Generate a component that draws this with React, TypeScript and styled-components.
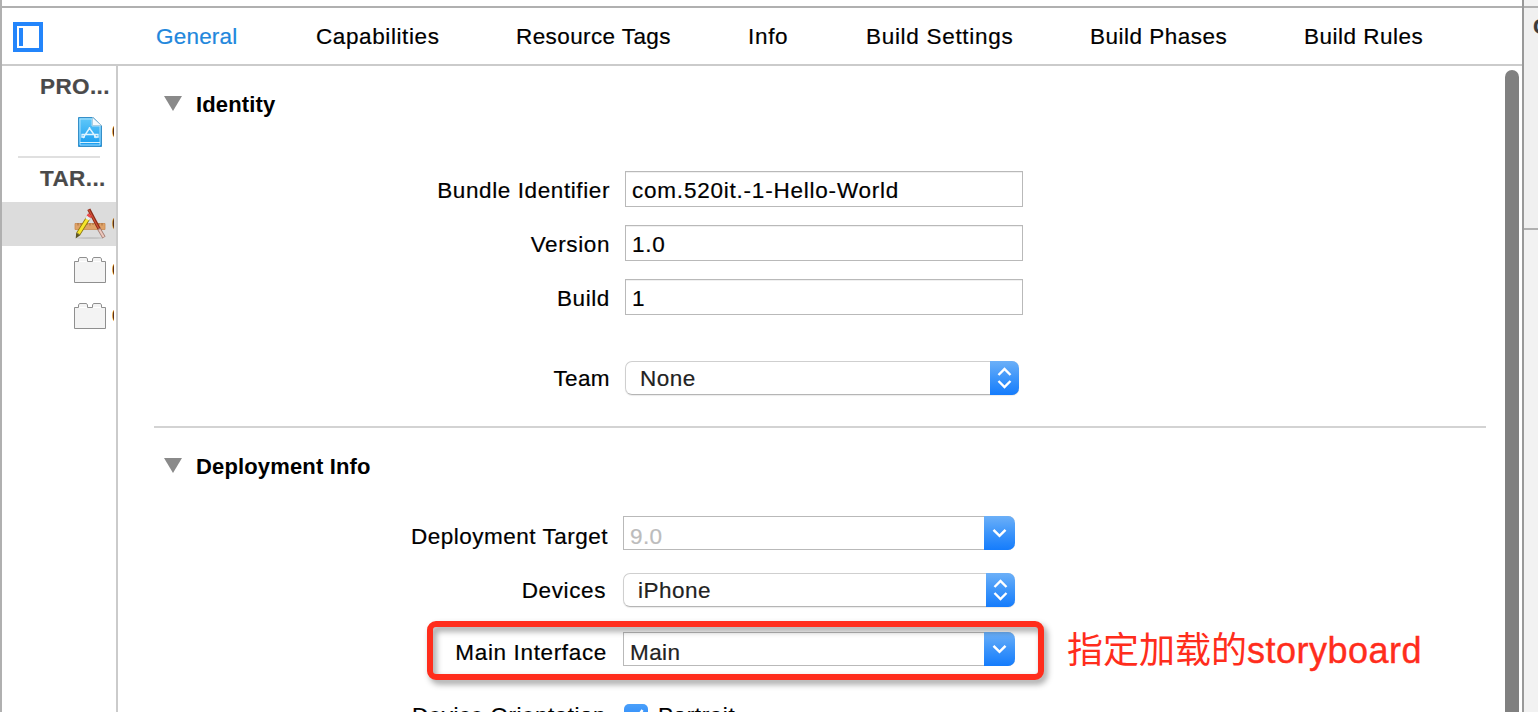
import React from "react";
import styled, { createGlobalStyle } from "styled-components";

const GlobalStyle = createGlobalStyle`
  * { box-sizing: border-box; }
  html, body { margin: 0; padding: 0; background: #fff; overflow: hidden; }
  body {
    font-family: "Liberation Sans", Arial, "Noto Sans CJK SC", sans-serif;
    font-size: 22.5px;
    line-height: 26px;
    color: #000;
    -webkit-text-stroke: 0.2px currentColor;
  }
`;

const Window = styled.div`
  display: flex;
  width: 1538px;
  height: 712px;
  overflow: hidden;
`;

const Editor = styled.div`
  display: flex;
  flex-direction: column;
  width: 1524px;
  border-left: 2px solid #b0b0b0;
  border-right: 2px solid #999;
`;

const Strip = styled.div`
  flex: none;
  height: 8px;
  border-bottom: 2px solid #b0b0b0;
`;

const Header = styled.header`
  flex: none;
  display: flex;
  align-items: center;
  height: 58px;
  padding-left: 11px;
  border-bottom: 2px solid #cbcbcb;
`;

const PanelToggle = styled.div`
  flex: none;
  width: 30px;
  height: 30px;
  margin-top: 2px;
  padding: 2px;
  border: 4px solid #2385fb;
`;

const PanelBar = styled.div`
  width: 4px;
  height: 18px;
  background: #2385fb;
`;

const Tabs = styled.nav`
  display: grid;
  grid-template-columns: 160px 200px 232px 118px 224px 214px 140px;
  margin: 2px 0 0 113px;
`;

const Tab = styled.span<{ $active?: boolean; $track: number }>`
  color: ${(p) => (p.$active ? "#2287dc" : "#000")};
  letter-spacing: ${(p) => p.$track}px;
  white-space: nowrap;
`;

const Body = styled.div`
  flex: 1;
  min-height: 0;
  display: flex;
`;

const Sidebar = styled.aside`
  flex: none;
  width: 116px;
  border-right: 2px solid #cbcbcb;
  overflow: hidden;
`;

const SideHeading = styled.div`
  height: 44px;
  padding: 8px 0 0 38px;
  font-weight: bold;
  letter-spacing: 0.4px;
  color: #4a4a4a;
  white-space: nowrap;
`;

const SideItem = styled.div<{ $selected?: boolean; $height: number }>`
  display: flex;
  align-items: center;
  height: ${(p) => p.$height}px;
  padding-left: 70px;
  background: ${(p) => (p.$selected ? "#dcdcdc" : "transparent")};

  svg { flex: none; display: block; }
`;

const ItemName = styled.span`
  width: 2px;
  margin-left: 2px;
  overflow: hidden;
  white-space: nowrap;
  font-size: 18px;
  color: #4a3010;
`;

const SideRule = styled.div`
  width: 82px;
  height: 2px;
  margin: 2px 0 0 16px;
  background: #e0e0e0;
`;

const Content = styled.main`
  position: relative;
  flex: 1;
  min-width: 0;
  overflow: hidden;
  padding-left: 36px;
`;

const SectionTitle = styled.h2`
  display: flex;
  align-items: center;
  gap: 14px;
  height: 26px;
  margin: 26px 0 0;
  padding-left: 10px;
  font-size: 22px;
  font-weight: bold;
  letter-spacing: 0.15px;
  -webkit-text-stroke: 0;

  svg { margin-top: -3px; }
`;

const Row = styled.div<{ $top: number; $height: number }>`
  display: flex;
  height: ${(p) => p.$height}px;
  margin-top: ${(p) => p.$top}px;
`;

const Label = styled.label<{ $width: number; $gap: number; $drop?: number; $track?: number }>`
  flex: none;
  width: ${(p) => p.$width}px;
  margin-right: ${(p) => p.$gap}px;
  margin-top: ${(p) => 5 + (p.$drop ?? 2)}px;
  text-align: right;
  letter-spacing: ${(p) => p.$track ?? 0.6}px;
  white-space: nowrap;
`;

const Field = styled.div`
  width: 398px;
  height: 36px;
  padding: 6px 6px 0;
  border: 1px solid #b9b9b9;
  box-shadow: inset 0 1px 0 #f0f0f0;
  letter-spacing: 0.78px;
`;

const Popup = styled.div<{ $width: number }>`
  display: flex;
  justify-content: space-between;
  width: ${(p) => p.$width}px;
  height: 34px;
  border: 1px solid #cfcfcf;
  border-bottom-color: #b5b5b5;
  border-right: 0;
  border-radius: 7px;
  padding: 4px 0 0 14px;
  color: #222;
  letter-spacing: 0.5px;
  box-shadow: 0 1px 1px rgba(0, 0, 0, 0.08);
`;

const Combo = styled.div<{ $placeholder?: boolean }>`
  display: flex;
  justify-content: space-between;
  width: 392px;
  height: 34px;
  border: 1px solid #b9b9b9;
  border-right: 0;
  border-radius: 0 7px 7px 0;
  padding: 7px 0 0 6px;
  color: ${(p) => (p.$placeholder ? "#bcbcbc" : "#222")};
  letter-spacing: 0.4px;
`;

const Cap = styled.span<{ $width: number; $lift: number }>`
  display: flex;
  align-items: center;
  justify-content: center;
  width: ${(p) => p.$width}px;
  height: 34px;
  margin-top: -${(p) => p.$lift}px;
  border-radius: 0 7px 7px 0;
  background: linear-gradient(#6cb0f8, #3d95fa 50%, #157cfc);
`;

const Divider = styled.div`
  width: 1332px;
  height: 2px;
  margin-top: 31px;
  background: #d3d3d3;
`;

const Checkbox = styled.span`
  flex: none;
  width: 24px;
  height: 24px;
  margin-right: 10px;
  border-radius: 5px;
  background: linear-gradient(#4ba0fa, #1a7ffc);

  svg { display: block; }
`;

const CheckLabel = styled.span`
  letter-spacing: 0.6px;
  margin-top: -1px;
`;

const Highlight = styled.div`
  position: absolute;
  left: 309px;
  top: 555px;
  width: 617px;
  height: 59px;
  border: 6px solid #ff2d1c;
  border-radius: 9px;
  filter: drop-shadow(3px 4px 3px rgba(0, 0, 0, 0.4));
`;

const Annotation = styled.div`
  position: absolute;
  left: 949px;
  top: 560px;
  font-size: 36px;
  line-height: 50px;
  color: #ff2d1c;
  white-space: nowrap;
  -webkit-text-stroke: 0;
`;

const Latin = styled.span`
  letter-spacing: 0.5px;
  -webkit-text-stroke: 0.4px currentColor;
`;

const Scrollbar = styled.div`
  position: absolute;
  right: 3px;
  top: 4px;
  bottom: -10px;
  width: 14px;
  border-radius: 7px;
  background: #808080;
`;

const Inspector = styled.aside`
  width: 14px;
  overflow: hidden;
  background: #f2f2f2;
`;

const InspectorTitle = styled.div`
  height: 222px;
  padding: 6px 0 0 9px;
  border-bottom: 2px solid #b0b0b0;
  font-weight: bold;
  color: #3b3b3b;
  background: #f0f0f0;
`;

const Triangle = () => (
  <svg width="18" height="15" viewBox="0 0 18 15">
    <path d="M0 0H18L9 15Z" fill="#8a8a8a" />
  </svg>
);

const UpDown = () => (
  <svg width="16" height="22" viewBox="0 0 16 22" fill="none" stroke="#fff" strokeWidth="2.4">
    <path d="M1.5 8L7.5 2L13.5 8M1.5 14L7.5 20L13.5 14" />
  </svg>
);

const Down = () => (
  <svg width="16" height="10" viewBox="0 0 16 10" fill="none" stroke="#fff" strokeWidth="2.5">
    <path d="M1.5 1.8L7.5 7.8L13.5 1.8" />
  </svg>
);

const ProjectIcon = () => (
  <svg width="38" height="32" viewBox="0 0 38 32">
    <defs>
      <linearGradient id="doc" x1="0" y1="0" x2="0" y2="1">
        <stop offset="0" stopColor="#62c9f9" />
        <stop offset="1" stopColor="#159bf0" />
      </linearGradient>
    </defs>
    <path d="M6.5 1.5H21L29.5 9.5V30.5H6.5Z" fill="url(#doc)" stroke="#368fc8" />
    <path d="M8 29V3H20V10H28V29Z" fill="none" stroke="#b6e3fb" strokeWidth="0.9" />
    <path d="M20.5 1.5V9.5H29.5Z" fill="#f4fafd" stroke="#a7c4d5" strokeWidth="0.7" />
    <path d="M8 26.5H28" stroke="#d8f1fd" />
    <path d="M18 11.5L11 22M17 11.5L24.5 22M9.5 18.5H26.5M9.5 21H13M22 21H26.5" fill="none" stroke="#dff4ff" strokeWidth="1.4" />
    <path d="M10 18.5V21.5M26 18.5V21.5" stroke="#dff4ff" />
  </svg>
);

const AppIcon = () => (
  <svg width="38" height="34" viewBox="0 0 38 34">
    <ellipse cx="18" cy="31" rx="13" ry="1" fill="#c4c4c4" />
    <path d="M3 16.5H33V22.5H3Z" fill="#dfa268" stroke="#c98a52" strokeWidth="0.8" />
    <path d="M6 16V18.5M9 16V18M12 16V18.5M15 16V18M18 16V18.5M21 16V18M24 16V18.5M27 16V18M30 16V18.5" stroke="#9a6230" strokeWidth="0.8" />
    <path d="M16.8 2.3L28 23.5" stroke="#8c2b18" strokeWidth="3.4" />
    <path d="M16.8 2.8L26.8 21.5" stroke="#cf5236" strokeWidth="1.2" />
    <path d="M26.8 21.5L32 30.5" stroke="#a37d73" strokeWidth="3.6" />
    <path d="M27.3 22.5L31.7 30" stroke="#edc8bd" strokeWidth="2" />
    <path d="M16.5 10.5L6.2 27" stroke="#8a7712" strokeWidth="4.6" />
    <path d="M16.3 10.8L6.5 26.5" stroke="#f6e52b" strokeWidth="3" />
    <path d="M18 7.5L16.5 10" stroke="#e94a4a" strokeWidth="4.4" />
    <path d="M16.6 10L15.2 12.3" stroke="#e9eef2" strokeWidth="4.4" />
    <path d="M4.2 25.8L8.2 28.2L3.7 31.5Z" fill="#5d5524" />
  </svg>
);

const BrickIcon = () => (
  <svg width="38" height="28" viewBox="0 0 38 28">
    <path
      d="M2.5 26.5V5.5H6.5V3L7.5 1.5H14.5L15.5 3V5.5H20.5V3L21.5 1.5H28.5L29.5 3V5.5H33.5V26.5Z"
      fill="#f3f3f3"
      stroke="#8f8f8f"
    />
    <path d="M7 5.5H15M21 5.5H29" stroke="#fff" strokeWidth="1.2" />
  </svg>
);

const Check = () => (
  <svg width="24" height="24" viewBox="0 0 24 24" fill="none" stroke="#fff" strokeWidth="2.6">
    <path d="M6 12.5L10.5 17.5L18.5 6" />
  </svg>
);

const tabs = [
  { name: "General", track: 0.2, active: true },
  { name: "Capabilities", track: 0.6 },
  { name: "Resource Tags", track: 0.4 },
  { name: "Info", track: 0.7 },
  { name: "Build Settings", track: 0.7 },
  { name: "Build Phases", track: 0.5 },
  { name: "Build Rules", track: 0.5 },
];

const App: React.FC = () => (
  <>
    <GlobalStyle />
    <Window>
      <Editor>
        <Strip />
        <Header>
          <PanelToggle>
            <PanelBar />
          </PanelToggle>
          <Tabs>
            {tabs.map((t) => (
              <Tab key={t.name} $active={t.active} $track={t.track}>
                {t.name}
              </Tab>
            ))}
          </Tabs>
        </Header>
        <Body>
          <Sidebar>
            <SideHeading>PRO...</SideHeading>
            <SideItem $height={44}>
              <ProjectIcon />
              <ItemName>0</ItemName>
            </SideItem>
            <SideRule />
            <SideHeading>TAR...</SideHeading>
            <SideItem $height={44} $selected>
              <AppIcon />
              <ItemName>0</ItemName>
            </SideItem>
            <SideItem $height={47}>
              <BrickIcon />
              <ItemName>0</ItemName>
            </SideItem>
            <SideItem $height={45}>
              <BrickIcon />
              <ItemName>0</ItemName>
            </SideItem>
          </Sidebar>
          <Content>
            <SectionTitle>
              <Triangle />
              Identity
            </SectionTitle>
            <Row $top={53} $height={36}>
              <Label $width={456} $gap={15}>Bundle Identifier</Label>
              <Field>com.520it.-1-Hello-World</Field>
            </Row>
            <Row $top={18} $height={36}>
              <Label $width={456} $gap={15}>Version</Label>
              <Field>1.0</Field>
            </Row>
            <Row $top={18} $height={36}>
              <Label $width={456} $gap={15}>Build</Label>
              <Field>1</Field>
            </Row>
            <Row $top={46} $height={34}>
              <Label $width={456} $gap={15} $drop={0} $track={0.4}>Team</Label>
              <Popup $width={394}>
                None
                <Cap $width={29} $lift={5}>
                  <UpDown />
                </Cap>
              </Popup>
            </Row>
            <Divider />
            <SectionTitle>
              <Triangle />
              Deployment Info
            </SectionTitle>
            <Row $top={36} $height={34}>
              <Label $width={454} $gap={15} $drop={3} $track={0.5}>Deployment Target</Label>
              <Combo $placeholder>
                9.0
                <Cap $width={31} $lift={8}>
                  <Down />
                </Cap>
              </Combo>
            </Row>
            <Row $top={23} $height={34}>
              <Label $width={452} $gap={17} $drop={0}>Devices</Label>
              <Popup $width={392}>
                iPhone
                <Cap $width={29} $lift={5}>
                  <UpDown />
                </Cap>
              </Popup>
            </Row>
            <Row $top={25} $height={34}>
              <Label $width={453} $gap={16} $drop={3} $track={0.65}>Main Interface</Label>
              <Combo>
                Main
                <Cap $width={31} $lift={8}>
                  <Down />
                </Cap>
              </Combo>
            </Row>
            <Row $top={38} $height={34}>
              <Label $width={452} $gap={18} $drop={-6} $track={0.5}>Device Orientation</Label>
              <Checkbox>
                <Check />
              </Checkbox>
              <CheckLabel>Portrait</CheckLabel>
            </Row>
            <Highlight />
            <Annotation>
              指定加载的<Latin>storyboard</Latin>
            </Annotation>
            <Scrollbar />
          </Content>
        </Body>
      </Editor>
      <Inspector>
        <Strip />
        <InspectorTitle>C</InspectorTitle>
      </Inspector>
    </Window>
  </>
);

export default App;
